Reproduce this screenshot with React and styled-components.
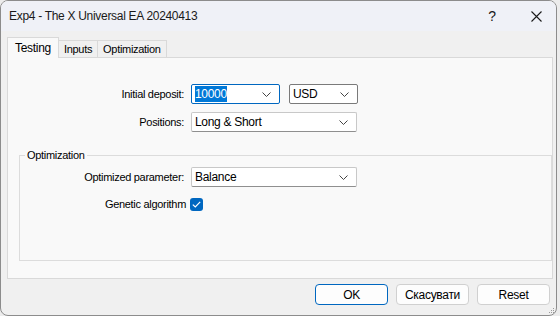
import React from 'react'
import styled, { createGlobalStyle } from 'styled-components'

const GlobalStyle = createGlobalStyle`
  html, body {
    margin: 0;
    padding: 0;
    background: #ececec;
  }
  body {
    font-family: "Liberation Sans", Arial, sans-serif;
    font-size: 11px;
    letter-spacing: -0.3px;
    color: #000;
  }
`

const Window = styled.div`
  position: relative;
  width: 557px;
  height: 316px;
  box-sizing: border-box;
  border: 1px solid #8c8c8c;
  border-radius: 8px;
  background: #f0f0f0;
  overflow: hidden;
  display: flex;
  flex-direction: column;
`

const TitleBar = styled.div`
  flex: none;
  height: 30px;
  display: flex;
  align-items: center;
  padding-left: 8px;
  background: #eff1f7;
`

const Title = styled.div`
  flex: 1;
  font-size: 12px;
  color: #1a1a1a;
`

const TitleButton = styled.div`
  width: ${p => p.$w}px;
  height: 30px;
  display: flex;
  align-items: center;
  justify-content: center;
  font-size: 14px;
  color: #1a1a1a;
`

const Body = styled.div`
  padding: 6px 3px 0 6px;
  display: flex;
  flex-direction: column;
`

const TabBar = styled.div`
  display: flex;
  align-items: flex-end;
  height: 20px;
`

const Tab = styled.div`
  position: relative;
  z-index: ${p => (p.$active ? 2 : 1)};
  height: ${p => (p.$active ? 21 : 17)}px;
  margin-bottom: ${p => (p.$active ? -1 : 0)}px;
  margin-left: ${p => (p.$first ? 0 : -1)}px;
  box-sizing: border-box;
  padding: 0 ${p => (p.$active ? 7 : 5)}px;
  display: flex;
  align-items: center;
  border: 1px solid #d9d9d9;
  border-bottom: none;
  background: ${p => (p.$active ? '#f9f9f9' : '#f0f0f0')};
  font-size: ${p => (p.$active ? 12 : 11)}px;
`

const Panel = styled.div`
  height: 222px;
  box-sizing: border-box;
  border: 1px solid #d9d9d9;
  background: #f9f9f9;
  padding-top: 26px;
`

const Row = styled.div`
  display: flex;
  align-items: center;
  gap: ${p => p.$gap ?? 7}px;
  height: 20px;
  margin-top: ${p => p.$top ?? 0}px;
`

const Label = styled.div`
  width: ${p => p.$w}px;
  flex: none;
  text-align: right;
  white-space: nowrap;
`

const Combo = styled.div`
  width: ${p => p.$w}px;
  height: 20px;
  box-sizing: border-box;
  display: flex;
  align-items: center;
  padding: 0 8px 0 3px;
  margin-left: ${p => p.$left ?? 0}px;
  background: #fff;
  border: 1px solid ${p => p.$border || '#c8c8c8'};
  border-bottom-color: ${p => p.$border || '#8f8f8f'};
  border-radius: 2px;
  font-size: 12px;
`

const ComboText = styled.span`
  flex: 1;
`

const Selected = styled.span`
  background: #0078d7;
  color: #fff;
  padding: 1px 0;
`

const Group = styled.fieldset`
  margin: 17px 0 0 11px;
  padding: 6px 0 46px 0;
  border: 1px solid #dcdcdc;
  min-width: 0;
`

const Legend = styled.legend`
  margin-left: 5px;
  padding: 0 2px;
  line-height: 12px;
  font-size: 11px;
`

const Check = styled.div`
  width: 13px;
  height: 13px;
  border-radius: 3px;
  background: #0067c0;
  display: flex;
  align-items: center;
  justify-content: center;
`

const Footer = styled.div`
  display: flex;
  justify-content: flex-end;
  gap: 8px;
  margin-top: 5px;
  padding-right: 6px;
`

const Button = styled.div`
  width: 73px;
  height: 21px;
  box-sizing: border-box;
  display: flex;
  align-items: center;
  justify-content: center;
  border: 1px solid ${p => (p.$primary ? '#0067c0' : '#d0d0d0')};
  border-radius: 4px;
  background: #fdfdfd;
  font-size: 12px;
`

const Grip = styled.svg`
  position: absolute;
  right: 1px;
  bottom: 1px;
`

const Chevron = () => (
  <svg width="9" height="5" viewBox="0 0 9 5">
    <path d="M0.5 0.5 L4.5 4.5 L8.5 0.5" fill="none" stroke="#444" strokeWidth="1" />
  </svg>
)

function Select({ w, border, left, children }) {
  return (
    <Combo $w={w} $border={border} $left={left}>
      <ComboText>{children}</ComboText>
      <Chevron />
    </Combo>
  )
}

export default function App() {
  return (
    <>
      <GlobalStyle />
      <Window>
        <TitleBar>
          <Title>Exp4 - The X Universal EA 20240413</Title>
          <TitleButton $w={48}>?</TitleButton>
          <TitleButton $w={40}>
            <svg width="11" height="11" viewBox="0 0 11 11">
              <path d="M0.5 0.5 L10.5 10.5 M10.5 0.5 L0.5 10.5" stroke="#1a1a1a" strokeWidth="1.1" />
            </svg>
          </TitleButton>
        </TitleBar>

        <Body>
          <TabBar>
            <Tab $active $first>Testing</Tab>
            <Tab>Inputs</Tab>
            <Tab>Optimization</Tab>
          </TabBar>

          <Panel>
            <Row>
              <Label $w={176}>Initial deposit:</Label>
              <Select w={89} border="#0067c0">
                <Selected>10000</Selected>
              </Select>
              <Select w={69} border="#7a7a7a" left={2}>USD</Select>
            </Row>
            <Row $top={8}>
              <Label $w={176}>Positions:</Label>
              <Select w={166}>Long &amp; Short</Select>
            </Row>

            <Group>
              <Legend>Optimization</Legend>
              <Row>
                <Label $w={164}>Optimized parameter:</Label>
                <Select w={166}>Balance</Select>
              </Row>
              <Row $top={7} $gap={4}>
                <Label $w={166}>Genetic algorithm</Label>
                <Check>
                  <svg width="9" height="7" viewBox="0 0 9 7">
                    <path d="M0.8 3.6 L3.3 6 L8.2 0.9" fill="none" stroke="#fff" strokeWidth="1.2" />
                  </svg>
                </Check>
              </Row>
            </Group>
          </Panel>
        </Body>

        <Footer>
          <Button $primary>OK</Button>
          <Button>Скасувати</Button>
          <Button>Reset</Button>
        </Footer>

        <Grip width="6" height="6" viewBox="0 0 6 6">
          <rect x="4" y="0" width="1" height="1" fill="#999" />
          <rect x="2" y="2" width="1" height="1" fill="#999" />
          <rect x="4" y="2" width="1" height="1" fill="#999" />
          <rect x="0" y="4" width="1" height="1" fill="#999" />
          <rect x="2" y="4" width="1" height="1" fill="#999" />
          <rect x="4" y="4" width="1" height="1" fill="#999" />
        </Grip>
      </Window>
    </>
  )
}
